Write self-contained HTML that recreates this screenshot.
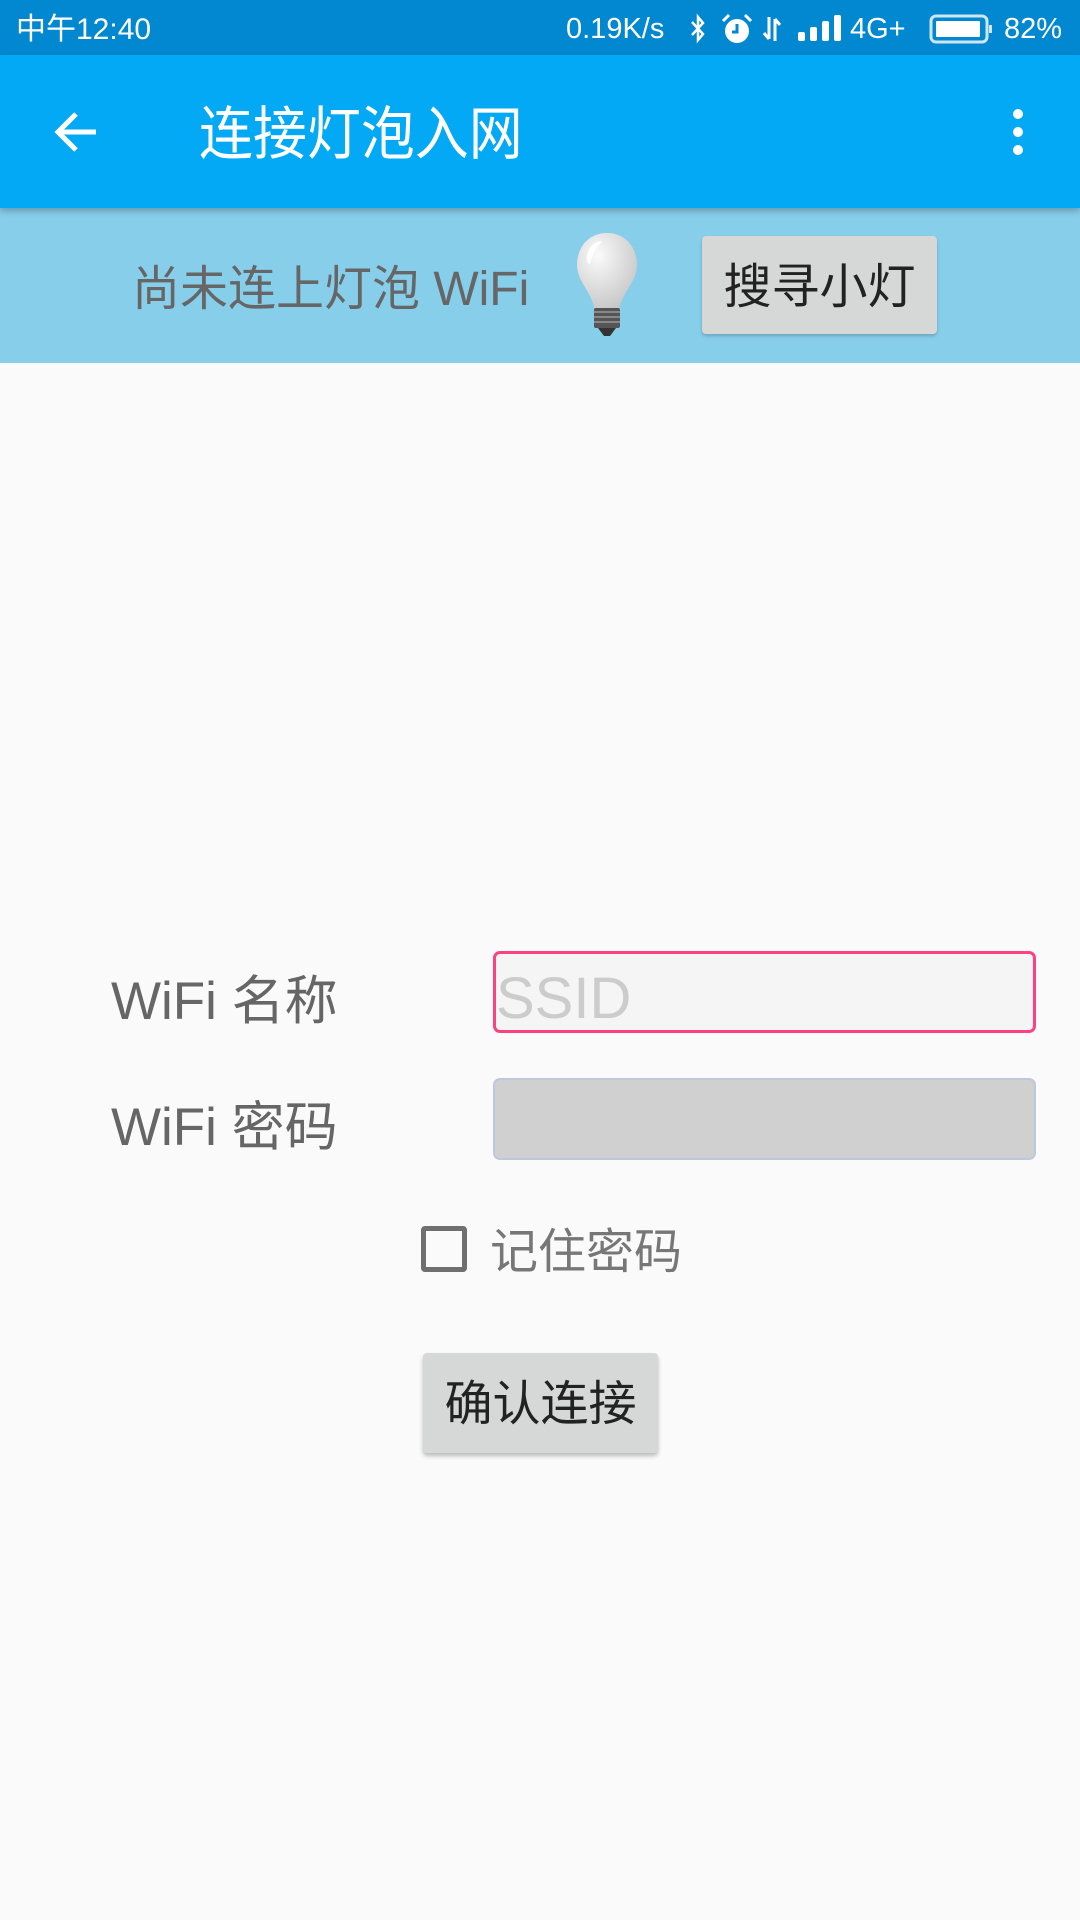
<!DOCTYPE html>
<html><head><meta charset="utf-8"><style>
*{margin:0;padding:0;box-sizing:border-box}
body{width:1080px;height:1920px;background:#fafafa;font-family:"Liberation Sans","Noto Sans CJK SC",sans-serif;position:relative;overflow:hidden}
.a{position:absolute;white-space:nowrap}
</style></head><body>
<div class="a" style="left:0;top:0;width:1080px;height:55px;background:#0288d1"></div>
<div class="a" style="left:16px;top:4px;font-size:30px;color:#fff">中午12:40</div>
<div class="a" style="left:566px;top:13px;font-size:29px;color:#fff">0.19K/s</div>
<svg class="a" style="left:688px;top:13px" width="20" height="32" viewBox="0 0 20 32"><path d="M4 9 L15 21 L10 27 L10 4 L15 10 L4 22" fill="none" stroke="#fff" stroke-width="2.5"/></svg>
<svg class="a" style="left:720px;top:13px" width="34" height="32" viewBox="0 0 34 32"><circle cx="17" cy="18" r="12" fill="#fff"/><path d="M17 11v8h-5" stroke="#0288d1" stroke-width="3" fill="none"/><path d="M3 8 L9 2 M31 8 L25 2" stroke="#fff" stroke-width="3"/></svg>
<svg class="a" style="left:762px;top:15px" width="20" height="28" viewBox="0 0 20 28"><path d="M7 2v22 M2 18l5 6 M13 26V4 M13 4l5 6" stroke="#fff" stroke-width="3" fill="none"/></svg>
<svg class="a" style="left:798px;top:15px" width="44" height="26" viewBox="0 0 44 26"><rect x="0" y="17" width="7" height="9" rx="2" fill="#fff"/><rect x="12" y="12" width="7" height="14" rx="2" fill="#fff"/><rect x="24" y="6" width="7" height="20" rx="2" fill="#fff"/><rect x="36" y="0" width="7" height="26" rx="2" fill="#fff"/></svg>
<div class="a" style="left:850px;top:13px;font-size:29px;color:#fff">4G+</div>
<svg class="a" style="left:929px;top:14px" width="64" height="30" viewBox="0 0 64 30"><rect x="2" y="2" width="56" height="26" rx="5" fill="none" stroke="#cfe6f5" stroke-width="3"/><rect x="7" y="7" width="44" height="16" rx="1" fill="#fff"/><rect x="60" y="11" width="3" height="8" fill="#cfe6f5"/></svg>
<div class="a" style="left:1004px;top:13px;font-size:29px;color:#fff">82%</div>

<div class="a" style="left:0;top:55px;width:1080px;height:153px;background:#03a9f4;box-shadow:0 3px 6px rgba(0,0,0,.25);z-index:2"></div>
<svg class="a" style="left:52px;top:108px;z-index:3" width="50" height="48" viewBox="0 0 50 48"><path d="M44 24H8 M24 6 L6 24 L24 42" stroke="#fff" stroke-width="5" fill="none"/></svg>
<div class="a" style="left:199px;top:87px;font-size:58px;color:#fff;z-index:3;transform:scaleX(0.93);transform-origin:left">连接灯泡入网</div>
<svg class="a" style="left:1006px;top:108px;z-index:3" width="24" height="48" viewBox="0 0 24 48"><circle cx="12" cy="6" r="5" fill="#fff"/><circle cx="12" cy="24" r="5" fill="#fff"/><circle cx="12" cy="42" r="5" fill="#fff"/></svg>

<div class="a" style="left:0;top:208px;width:1080px;height:155px;background:#87ceeb"></div>
<div class="a" style="left:132px;top:249px;font-size:48px;color:#666">尚未连上灯泡 WiFi</div>
<svg class="a" style="left:574px;top:232px" width="66" height="108" viewBox="0 0 66 108">
<defs><radialGradient id="g" cx="0.35" cy="0.3" r="0.8"><stop offset="0" stop-color="#fafafa"/><stop offset="1" stop-color="#c4c4c4"/></radialGradient></defs>
<path d="M33 1 C14 1 3 16 3 33 C3 50 18 60 20 76 L46 76 C48 60 63 50 63 33 C63 16 52 1 33 1Z" fill="url(#g)"/>
<path d="M14 20 C18 10 26 8 28 10 C22 14 18 24 16 32 C12 30 12 25 14 20Z" fill="#fff"/>
<rect x="20" y="76" width="26" height="20" rx="2" fill="#555"/>
<path d="M20 80 H46 M20 85 H46 M20 90 H46" stroke="#999" stroke-width="1.5"/>
<path d="M24 96 H42 L36 104 H30Z" fill="#333"/>
</svg>
<div class="a" style="left:702px;top:236px;width:235px;height:98px;background:#d6d7d7;border-radius:4px;box-shadow:0 2px 3px rgba(0,0,0,.2);font-size:48px;color:#222;text-align:center;line-height:104px">搜寻小灯</div>

<div class="a" style="left:111px;top:959px;font-size:53px;color:#666">WiFi 名称</div>
<div class="a" style="left:493px;top:951px;width:543px;height:82px;background:#f5f5f5;border:3px solid #ff4081;border-radius:7px;font-size:58px;color:#ccc;line-height:90px;padding-left:0;overflow:hidden">SSID</div>
<div class="a" style="left:111px;top:1085px;font-size:53px;color:#666">WiFi 密码</div>
<div class="a" style="left:493px;top:1078px;width:543px;height:82px;background:#d0d0d0;border:2px solid #bcc8dc;border-radius:7px"></div>

<div class="a" style="left:421px;top:1226px;width:46px;height:46px;border:5px solid #6f6f6f;border-radius:4px"></div>
<div class="a" style="left:490px;top:1212px;font-size:48px;color:#777">记住密码</div>

<div class="a" style="left:423px;top:1353px;width:235px;height:100px;background:#d6d7d7;border-radius:4px;box-shadow:0 3px 4px rgba(0,0,0,.25);font-size:48px;color:#222;text-align:center;line-height:104px">确认连接</div>
</body></html>
